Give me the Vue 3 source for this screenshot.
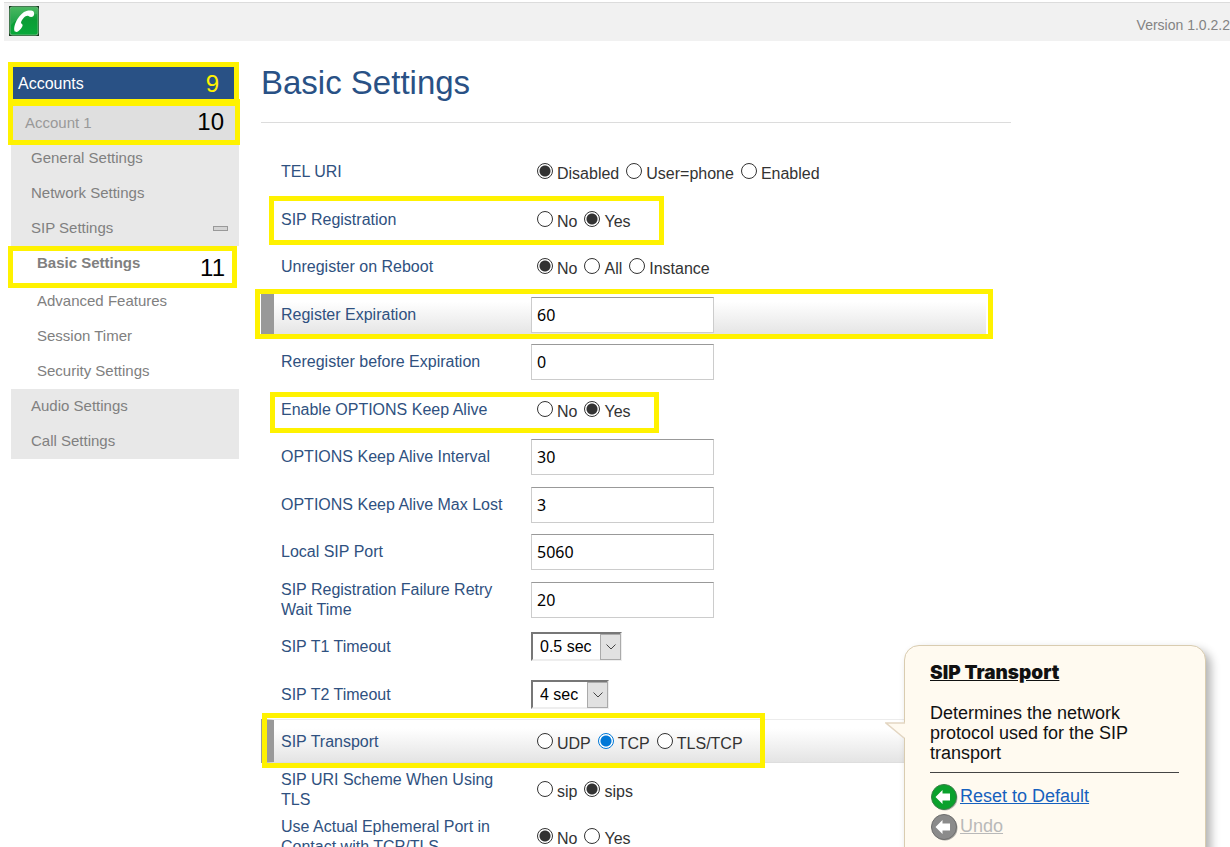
<script setup>
import { reactive } from 'vue'

const rows = reactive([
  { id: 'tel-uri', label: 'TEL URI', type: 'radio', options: ['Disabled', 'User=phone', 'Enabled'], value: 'Disabled' },
  { id: 'registration', label: 'SIP Registration', type: 'radio', options: ['No', 'Yes'], value: 'Yes', mark: 'mark-registration' },
  { id: 'unregister', label: 'Unregister on Reboot', type: 'radio', options: ['No', 'All', 'Instance'], value: 'No' },
  { id: 'expiration', label: 'Register Expiration', type: 'text', value: '60', active: true, mark: 'mark-expiration' },
  { id: 'reregister', label: 'Reregister before Expiration', type: 'text', value: '0' },
  { id: 'keep-alive', label: 'Enable OPTIONS Keep Alive', type: 'radio', options: ['No', 'Yes'], value: 'Yes', mark: 'mark-keepalive' },
  { id: 'interval', label: 'OPTIONS Keep Alive Interval', type: 'text', value: '30' },
  { id: 'max-lost', label: 'OPTIONS Keep Alive Max Lost', type: 'text', value: '3' },
  { id: 'port', label: 'Local SIP Port', type: 'text', value: '5060' },
  { id: 'retry', label: 'SIP Registration Failure Retry Wait Time', type: 'text', value: '20' },
  { id: 't1', label: 'SIP T1 Timeout', type: 'select', options: ['0.5 sec'], value: '0.5 sec' },
  { id: 't2', label: 'SIP T2 Timeout', type: 'select', options: ['4 sec'], value: '4 sec' },
  { id: 'transport', label: 'SIP Transport', type: 'radio', options: ['UDP', 'TCP', 'TLS/TCP'], value: 'TCP', active: true, focus: true, mark: 'mark-transport', help: true },
  { id: 'scheme', label: 'SIP URI Scheme When Using TLS', type: 'radio', options: ['sip', 'sips'], value: 'sips' },
  { id: 'ephemeral', label: 'Use Actual Ephemeral Port in Contact with TCP/TLS', type: 'radio', options: ['No', 'Yes'], value: 'No' }
])
</script>

<template>
  <div class="page">
    <header class="topbar">
      <svg class="logo" viewBox="0 0 30 30" role="img" aria-label="Phone">
        <defs>
          <linearGradient id="logo-fill" x1="0" y1="0" x2="0" y2="1">
            <stop offset="0" stop-color="#2fae4a" />
            <stop offset="0.45" stop-color="#0a9c35" />
            <stop offset="1" stop-color="#08a93a" />
          </linearGradient>
        </defs>
        <rect width="30" height="30" fill="#173c20" />
        <rect x="0.5" y="0.5" width="29" height="29" rx="3" fill="#6fb57f" />
        <rect x="1.5" y="1.5" width="27" height="27" rx="2" fill="url(#logo-fill)" />
        <path d="M2 2h26v6C18 9 8 12 2 19z" fill="#fff" opacity="0.12" />
        <path d="M5.500 25C4.500 22 6 17 8.500 13 11 9 14 6 17.500 5c3-0.800 6-0.500 7 0.500 1 1.500 0.800 4-0.500 5-1.500 0.800-3.500 0.300-4.500-0.500-1.500-0.800-3 0-4.500 1.500-1.800 2-2.800 3.500-3 5.500 0.800 1 2 1.500 1.500 3-0.800 2-2.500 4-4.500 5.500-1.200 0.700-3 0.500-3.500-0.500z" fill="#fff" />
      </svg>
      <span class="version">Version 1.0.2.2</span>
    </header>

    <div class="body">
      <nav class="sidebar">
        <div class="nav-head"><a href="#">Accounts</a><span class="step step-yellow">9</span></div>
        <div class="nav-account"><a href="#">Account 1</a><span class="step">10</span></div>
        <ul class="nav-list">
          <li><a href="#">General Settings</a></li>
          <li><a href="#">Network Settings</a></li>
          <li><a href="#">SIP Settings</a><i class="collapse"></i></li>
        </ul>
        <ul class="nav-sub">
          <li class="current"><a href="#">Basic Settings</a><span class="step">11</span></li>
          <li><a href="#">Advanced Features</a></li>
          <li><a href="#">Session Timer</a></li>
          <li><a href="#">Security Settings</a></li>
        </ul>
        <ul class="nav-list">
          <li><a href="#">Audio Settings</a></li>
          <li><a href="#">Call Settings</a></li>
        </ul>
      </nav>

      <main class="content">
        <h1>Basic Settings</h1>
        <form class="rows" @submit.prevent>
          <div v-for="row in rows" :key="row.id" class="row" :class="{ active: row.active, focus: row.focus }">
            <span v-if="row.type === 'radio'" :id="row.id + '-label'" class="label">{{ row.label }}</span>
            <label v-else class="label" :for="row.id">{{ row.label }}</label>

            <div v-if="row.type === 'radio'" class="radios" role="radiogroup" :aria-labelledby="row.id + '-label'">
              <label v-for="option in row.options" :key="option" class="radio">
                <input v-model="row.value" type="radio" :name="row.id" :value="option" />
                <span>{{ option }}</span>
              </label>
            </div>
            <input v-else-if="row.type === 'text'" :id="row.id" v-model="row.value" class="text" type="text" />
            <div v-else class="select">
              <select :id="row.id" v-model="row.value">
                <option v-for="option in row.options" :key="option">{{ option }}</option>
              </select>
              <span class="arrow">
                <svg viewBox="0 0 10 6"><path d="M0.5 0.5L5 5l4.500-4.500" fill="none" stroke="#444" /></svg>
              </span>
            </div>

            <i v-if="row.mark" class="mark" :class="row.mark"></i>

            <aside v-if="row.help" class="help">
              <svg class="pointer" viewBox="0 0 20 18">
                <path d="M20 1H1l19 15z" fill="#fffaf0" />
                <path d="M20 1H1l18 15" fill="none" stroke="#e3d6c2" stroke-width="1.500" />
              </svg>
              <h2>SIP Transport</h2>
              <p>Determines the network protocol used for the SIP transport</p>
              <a href="#" class="action">
                <svg viewBox="0 0 28 28">
                  <circle cx="15" cy="15" r="12.500" fill="#777" opacity="0.5" />
                  <circle cx="14" cy="14" r="12.500" fill="#0aa12c" stroke="#3a7d47" />
                  <path d="M5.500 14l7-7v3.500h7.500v7h-7.500V21z" fill="#fff" />
                </svg>
                <span>Reset to Default</span>
              </a>
              <a href="#" class="action undo">
                <svg viewBox="0 0 28 28">
                  <circle cx="15" cy="15" r="12.500" fill="#555" opacity="0.5" />
                  <circle cx="14" cy="14" r="12.500" fill="#8b8b8b" stroke="#6d6d6d" />
                  <path d="M5.500 14l7-7v3.500h7.500v7h-7.500V21z" fill="#fff" />
                </svg>
                <span>Undo</span>
              </a>
            </aside>
          </div>
        </form>
      </main>
    </div>
  </div>
</template>

<style>
body {
  margin: 0;
  background: #fff;
}
</style>

<style scoped>
* {
  box-sizing: border-box;
}
.page {
  height: 100vh;
  overflow: hidden;
  padding: 2px 0 0 4px;
  font-family: "Liberation Sans", Arial, sans-serif;
  font-size: 16px;
  line-height: 20px;
}
.topbar {
  display: flex;
  justify-content: space-between;
  align-items: center;
  height: 39px;
  padding-left: 5px;
  background: #f1f1f1;
  border-top: 1px solid #dcdcdc;
}
.logo {
  width: 30px;
  height: 30px;
  margin-bottom: 2px;
}
.version {
  padding-top: 5px;
  white-space: nowrap;
  font-size: 14px;
  color: #838383;
}
.body {
  display: flex;
  gap: 22px;
  padding: 26px 0 0 7px;
}
.sidebar {
  flex: 0 0 228px;
  font-size: 15px;
}
.sidebar a {
  color: inherit;
  text-decoration: none;
}
.nav-head,
.nav-account,
.sidebar li {
  position: relative;
  display: flex;
  justify-content: space-between;
  align-items: center;
}
.nav-head {
  height: 32px;
  margin-bottom: 4px;
  padding: 1px 20px 0 7px;
  background: #295185;
  color: #fff;
  font-size: 16px;
}
.nav-account {
  height: 38px;
  padding: 0 15px 0 14px;
  background: #dfdfdf;
  color: #999;
}
.nav-account a {
  padding-top: 2px;
}
.nav-head::after,
.nav-account::after,
.current::after {
  content: "";
  position: absolute;
  border: 5px solid #fff200;
  pointer-events: none;
}
.nav-head::after {
  inset: -5px 0 -5px -3px;
}
.nav-account::after {
  inset: -4px -1px -4px -3px;
  border-top-width: 7px;
}
.current::after {
  inset: 0 2px -4px -3px;
}
.sidebar ul {
  margin: 0;
  padding: 0;
  list-style: none;
}
.sidebar li {
  height: 35px;
  padding: 0 11px 0 20px;
  color: #808080;
}
.sidebar li a {
  padding-bottom: 2px;
}
.nav-list {
  background: #e8e8e8;
}
.nav-sub li {
  padding: 0 14px 0 26px;
}
.nav-sub .current {
  height: 38px;
  padding-bottom: 3px;
  font-weight: bold;
}
.step {
  font-size: 24px;
  font-weight: normal;
  color: #000;
}
.step-yellow {
  color: #fff200;
}
.current .step {
  padding-top: 8px;
}
.collapse {
  width: 15px;
  height: 5px;
  border: 1px solid #999;
  background: #d4d4d4;
}
.content {
  flex: 0 1 750px;
  min-width: 0;
}
h1 {
  height: 56px;
  margin: 0 0 26px;
  border-bottom: 1px solid #dcdcdc;
  font-size: 33px;
  line-height: 32px;
  font-weight: normal;
  color: #295185;
}
.row {
  position: relative;
  display: flex;
  align-items: center;
  height: 44px;
  margin: 0 25px 3px 0;
  padding-left: 20px;
}
.row:nth-child(odd) {
  margin-bottom: 4px;
}
.active {
  padding-left: 7px;
  border-left: 13px solid #999;
  border-top: 1px solid #ececec;
  border-bottom: 1px solid #dedede;
  background: linear-gradient(#fff 20%, #e4e4e4) padding-box;
}
.label {
  flex: 0 0 230px;
  margin-right: 20px;
  padding-top: 2px;
  color: #2f5180;
}
.radios {
  display: flex;
  gap: 7px;
  padding-left: 6px;
}
.radio {
  display: flex;
  align-items: center;
  gap: 4px;
  color: #333;
  white-space: nowrap;
}
.radio span {
  padding-top: 5px;
}
.radio input {
  appearance: none;
  width: 16px;
  height: 16px;
  margin: 0;
  border: 1px solid #333;
  border-radius: 50%;
  background: #fff;
}
.radio input:checked {
  background: radial-gradient(circle, #333 5px, #fff 6px);
}
.focus .radio input:checked {
  border-color: #0078d7;
  background: radial-gradient(circle, #0078d7 5px, #fff 6px);
}
.text {
  width: 183px;
  height: 36px;
  margin-top: 2px;
  padding: 0 5px;
  border: 1px solid #ccc;
  border-top-color: #999;
  background: #fff;
  font-family: "Noto Sans", sans-serif;
  font-size: 16px;
  color: #000;
}
.select {
  position: relative;
}
.select select {
  display: block;
  appearance: none;
  height: 29px;
  padding: 1px 28px 0 7px;
  border: 2px solid #eee;
  border-top-color: #777;
  border-left-color: #777;
  border-radius: 0;
  background: #fff;
  font: inherit;
  color: #000;
}
.arrow {
  position: absolute;
  top: 2px;
  right: 1px;
  bottom: 1px;
  display: flex;
  align-items: center;
  justify-content: center;
  width: 21px;
  border: 1px solid #aaa;
  background: #e1e1e1;
  pointer-events: none;
}
.arrow svg {
  width: 10px;
  height: 6px;
}
.mark {
  position: absolute;
  border: 5px solid #fff200;
  pointer-events: none;
}
.mark-registration {
  inset: -1px auto -4px 8px;
  width: 395px;
}
.mark-expiration {
  inset: -4px -7px -4px -19px;
}
.mark-keepalive {
  inset: 5px auto -2px 9px;
  width: 389px;
}
.mark-transport {
  inset: -7px auto -6px -12px;
  width: 503px;
}
.help {
  position: absolute;
  top: -75px;
  left: 630px;
  z-index: 2;
  width: 302px;
  padding: 17px 26px 30px 25px;
  border: 1px solid #d9ccb0;
  border-radius: 15px;
  background: #fffaf0;
  box-shadow: 5px 5px 10px rgba(0, 0, 0, 0.3);
  font-size: 18px;
  color: #111;
}
.pointer {
  position: absolute;
  top: 76px;
  left: -20px;
  width: 20px;
  height: 18px;
}
.help h2 {
  margin: 0 0 20px;
  font-family: Inter, sans-serif;
  font-size: 19px;
  font-weight: 900;
  line-height: 20px;
  text-decoration: underline;
}
.help p {
  margin: 0 0 9px;
  padding-bottom: 9px;
  border-bottom: 1px solid #444;
}
.action {
  display: flex;
  align-items: center;
  gap: 2px;
  height: 30px;
  color: #1661be;
}
.action svg {
  width: 28px;
  height: 28px;
}
.action span {
  padding-bottom: 2px;
}
.undo {
  color: #b9b9b9;
}
</style>
